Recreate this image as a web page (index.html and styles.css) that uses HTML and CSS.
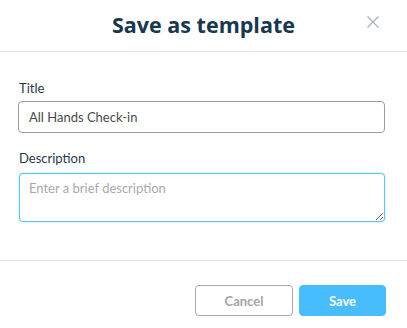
FILE: index.html
```html
<!DOCTYPE html>
<html lang="en">
<head>
  <meta charset="UTF-8">
  <meta name="viewport" content="width=device-width, initial-scale=1">
  <title>Save as template</title>
  <link rel="stylesheet" href="styles.css">
</head>
<body>
  <div class="modal">
    <div class="modal-header">
      <h1>Save as template</h1>
      <button class="close" aria-label="Close">
        <svg width="12" height="12" viewBox="0 0 12 12">
          <path d="M0.5 0.5 L11.5 11.5 M11.5 0.5 L0.5 11.5" stroke="#a3b0ba" stroke-width="1.2" fill="none"/>
        </svg>
      </button>
    </div>

    <div class="modal-body">
      <label class="field-label" for="title">Title</label>
      <input class="field-input" id="title" type="text" value="All Hands Check-in">

      <label class="field-label desc" for="desc">Description</label>
      <textarea class="field-text" id="desc" placeholder="Enter a brief description" autofocus></textarea>
    </div>

    <div class="modal-footer">
      <button class="btn btn-cancel">Cancel</button>
      <button class="btn btn-save">Save</button>
    </div>
  </div>
</body>
</html>
```

FILE: styles.css
```css
* {
  margin: 0;
  padding: 0;
  box-sizing: border-box;
}
html, body {
  height: 100%;
  background: #fff;
  font-family: 'Lato', 'Noto Sans', sans-serif;
  overflow: hidden;
}

.modal-header {
  position: relative;
  height: 52px;
  border-bottom: 1px solid #e1e4e8;
  display: flex;
  align-items: center;
  justify-content: center;
}

.modal-header h1 {
  font-family: 'Open Sans', 'Lato', sans-serif;
  font-size: 21.5px;
  font-weight: 700;
  color: #17384d;
  margin-top: -2px;
}

.close {
  position: absolute;
  top: 16px;
  right: 28px;
  width: 12px;
  height: 12px;
  border: none;
  background: none;
  display: flex;
}

.modal-body {
  display: flex;
  flex-direction: column;
  padding: 28px 22px 38px 18px;
}

.field-label {
  font-size: 13px;
  color: #1f3a4c;
  height: 16px;
  line-height: 16px;
  margin-bottom: 5px;
  padding-left: 1px;
}

.field-label.desc {
  margin-top: 17px;
  margin-bottom: 7px;
}

.field-input {
  height: 32px;
  border: 1px solid #9c9c9c;
  border-radius: 4px;
  padding: 0 10px;
  font-family: inherit;
  font-size: 13px;
  color: #4a4a4a;
  outline: none;
}

.field-text {
  height: 49px;
  margin-left: 1px;
  border: 1px solid #5bc4f8;
  border-radius: 4px;
  box-shadow: 0 0 2px rgba(91, 196, 248, 0.6);
  padding: 6px 9px;
  font-family: inherit;
  font-size: 13px;
  color: #4a4a4a;
  outline: none;
  resize: vertical;
}

.field-text::placeholder {
  color: #a9a9a9;
}

.modal-footer {
  border-top: 1px solid #e1e4e8;
  display: flex;
  justify-content: flex-end;
  gap: 6px;
  padding: 24px 21px 0 0;
}

.btn {
  height: 31px;
  border-radius: 4px;
  font-family: inherit;
  font-size: 13px;
  font-weight: 700;
}

.btn-cancel {
  width: 98px;
  background: #fff;
  border: 1px solid #aaa;
  color: #a6a6a6;
}

.btn-save {
  width: 87px;
  background: #47bdfd;
  border: 1px solid #47bdfd;
  color: #fff;
}
```
